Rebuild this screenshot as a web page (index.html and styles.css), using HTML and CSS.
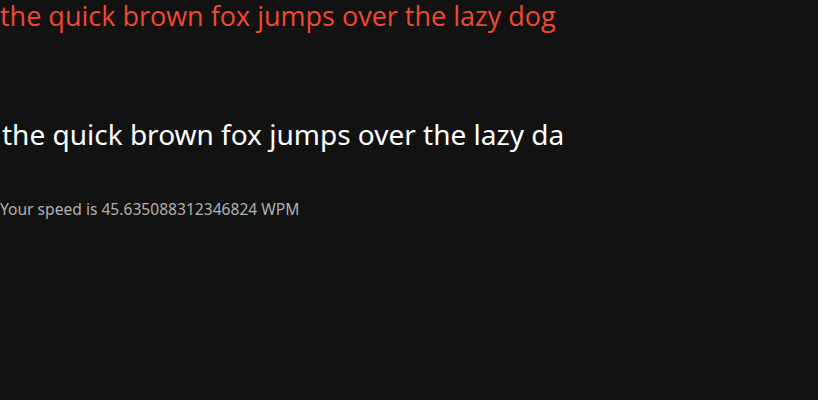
FILE: index.html
```html
<!DOCTYPE html>
<html>
<head>
<meta charset="utf-8">
<link rel="stylesheet" href="styles.css">
</head>
<body>
<div class="app">
  <div class="target">the quick brown fox jumps over the lazy dog</div>
  <div class="typed">the quick brown fox jumps over the lazy da</div>
  <div class="speed">Your speed is 45.635088312346824 WPM</div>
</div>
</body>
</html>
```
FILE: styles.css
```css
html, body {
  margin: 0;
  padding: 0;
  background: #121212;
}
.app {
  display: flex;
  flex-direction: column;
  align-items: flex-start;
}
.target {
  font-family: "Open Sans", "Noto Sans", sans-serif;
  font-size: 27px;
  line-height: 32px;
  color: #f4472f;
}
.typed {
  font-family: "Noto Sans", "Open Sans", sans-serif;
  font-size: 28px;
  line-height: 40px;
  color: #ffffff;
  margin-top: 82px;
  padding-left: 2px;
}
.speed {
  font-family: "Noto Sans", sans-serif;
  font-size: 15.6px;
  line-height: 20px;
  color: #b0b0b0;
  margin-top: 45px;
}
```
